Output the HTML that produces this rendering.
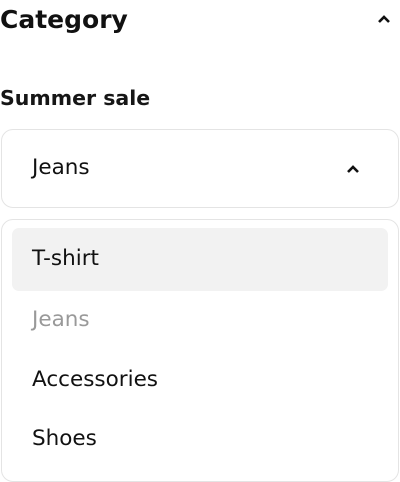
<!DOCTYPE html>
<html><head><style>
body{margin:0;width:400px;height:482px;background:#fff;font-family:"DejaVu Sans","Liberation Sans",sans-serif;color:#111;position:relative;overflow:hidden}
.a{position:absolute}
.box{position:absolute;left:1px;width:398px;border:1.5px solid #e4e4e4;border-radius:12px;box-sizing:border-box}
.t{position:absolute;left:32px;font-size:21.5px;line-height:24px}
</style></head><body>
<div class="a" style="left:0;top:4px;font-size:25px;font-weight:bold;line-height:32px">Category</div>
<svg class="a" style="left:377px;top:14px" width="14" height="10" viewBox="0 0 14 10"><path d="M2 8L7 3L12 8" fill="none" stroke="#111" stroke-width="2.6"/></svg>
<div class="a" style="left:0;top:86px;font-size:20.5px;font-weight:bold;line-height:24px;color:#161616">Summer sale</div>
<div class="box" style="top:129px;height:79px"></div>
<div class="t" style="top:156px">Jeans</div>
<svg class="a" style="left:346px;top:164px" width="14" height="10" viewBox="0 0 14 10"><path d="M2 8L7 3L12 8" fill="none" stroke="#111" stroke-width="2.6"/></svg>
<div class="box" style="top:219px;height:263px"></div>
<div class="a" style="left:12px;top:228px;width:376px;height:63px;background:#f2f2f2;border-radius:7px"></div>
<div class="t" style="top:247px">T-shirt</div>
<div class="t" style="top:308px;color:#999">Jeans</div>
<div class="t" style="top:368px">Accessories</div>
<div class="t" style="top:427px">Shoes</div>
</body></html>
